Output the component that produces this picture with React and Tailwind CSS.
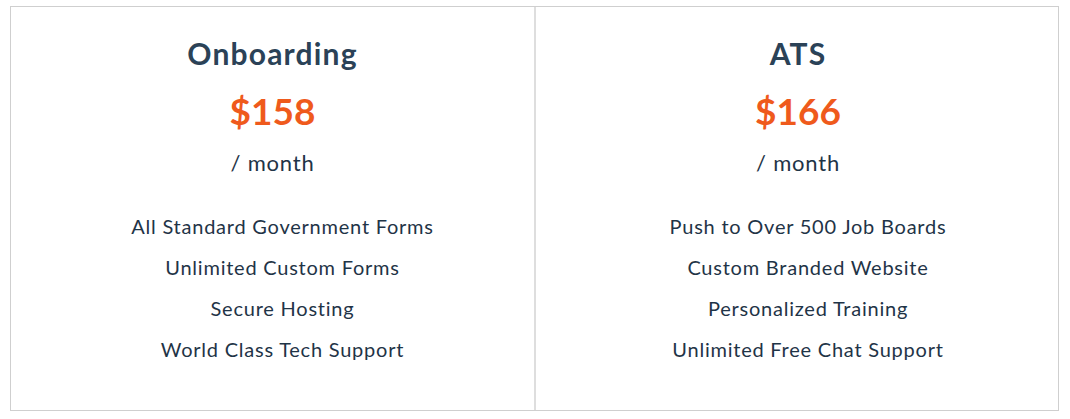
export default function App() {
  const plans = [
    {
      name: "Onboarding",
      price: "$158",
      features: [
        "All Standard Government Forms",
        "Unlimited Custom Forms",
        "Secure Hosting",
        "World Class Tech Support",
      ],
    },
    {
      name: "ATS",
      price: "$166",
      features: [
        "Push to Over 500 Job Boards",
        "Custom Branded Website",
        "Personalized Training",
        "Unlimited Free Chat Support",
      ],
    },
  ];
  return (
    <div className="w-[1070px] h-[419px] bg-white pt-[6px] px-[10px]" style={{ fontFamily: "Lato, 'Noto Sans', sans-serif" }}>
      <div className="grid grid-cols-[525px_524px] w-[1049px] h-[405px] border border-[#cfcfcf]">
        {plans.map((p, i) => (
          <div
            key={p.name}
            className={`flex flex-col items-center pt-[26px] ${i === 0 ? "border-r-2 border-[#dedede]" : ""}`}
          >
            <h2 className="text-[30px] leading-[40px] font-bold text-[#2b4257] tracking-[1.2px]">{p.name}</h2>
            <div className="text-[37px] leading-[48px] font-bold text-[#ef5a1c] mt-[14px]">{p.price}</div>
            <div className="text-[22px] leading-[30px] text-[#1f3447] mt-[13px] tracking-[0.8px]">/ month</div>
            <ul className="mt-[28px] pl-[20px] flex flex-col items-center">
              {p.features.map((f) => (
                <li key={f} className="text-[20px] leading-[41px] text-[#1f3447] tracking-[0.77px]">
                  {f}
                </li>
              ))}
            </ul>
          </div>
        ))}
      </div>
    </div>
  );
}
